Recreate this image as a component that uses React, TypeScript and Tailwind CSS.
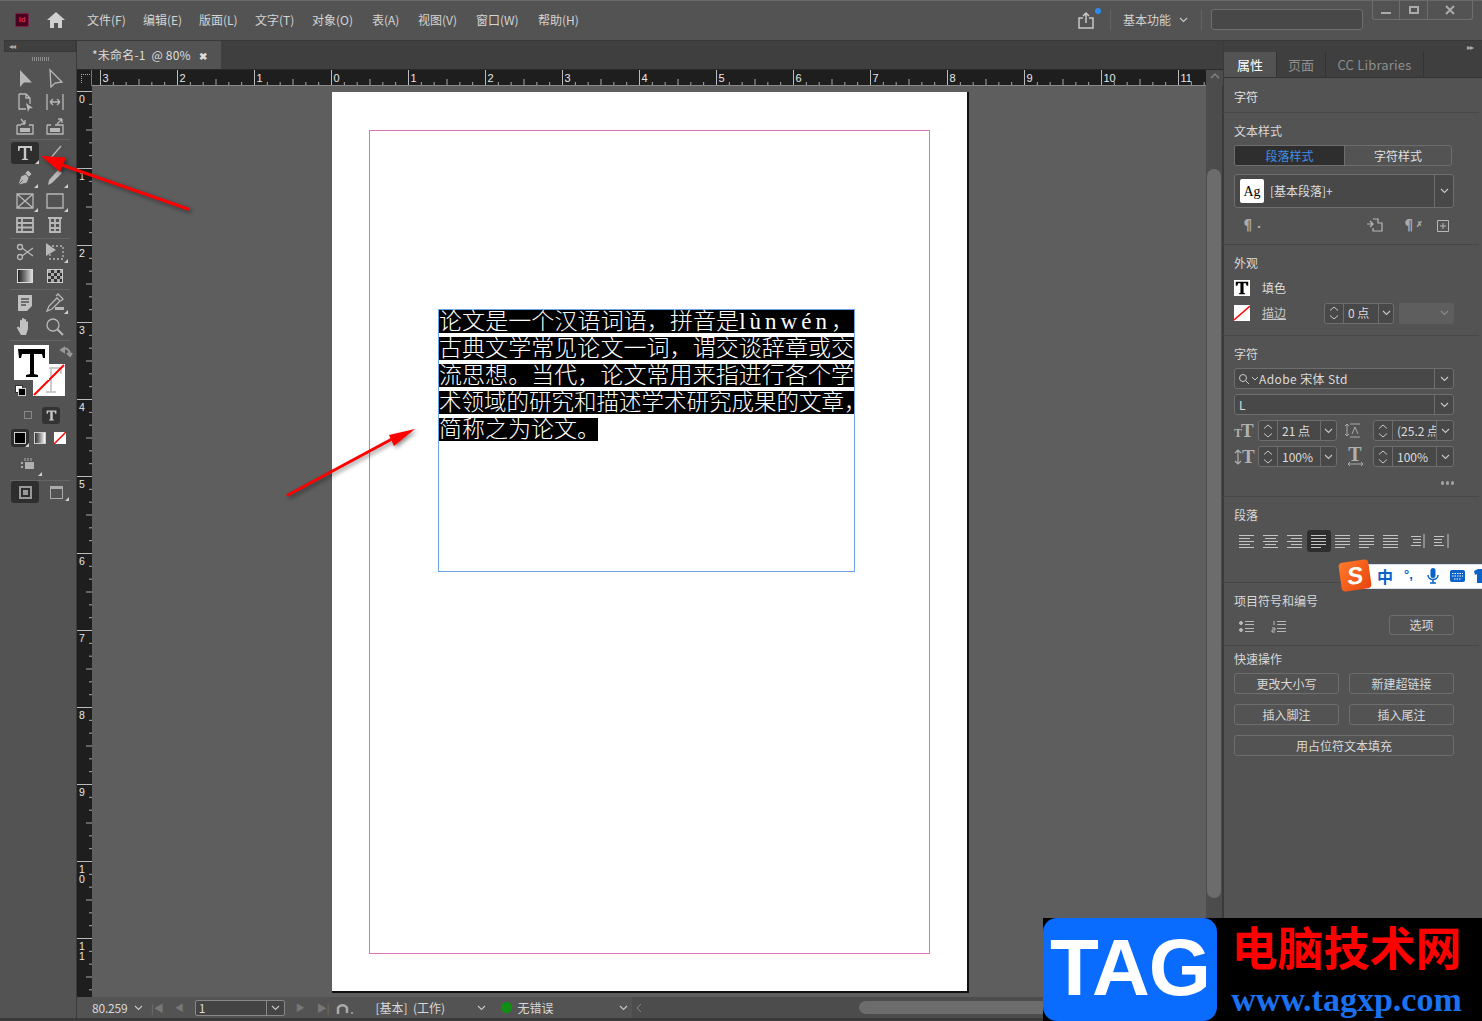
import React from "react";

const sans = "font-['Noto_Sans_CJK_SC','Liberation_Sans',sans-serif]";
const Tri = () => <span className="absolute right-0 bottom-0 w-0 h-0 border-l-[4px] border-l-transparent border-b-[4px] border-b-[#cfcfcf]" />;

const I = ({ children, tri, active, w = 26 }: { children: React.ReactNode; tri?: boolean; active?: boolean; w?: number }) => (
  <div className={`relative h-[22px] flex items-center justify-center rounded-[3px] ${active ? "bg-[#2e2e2e]" : ""}`} style={{ width: w }}>
    <svg width="22" height="22" viewBox="0 0 22 22" fill="none" stroke="#b8b8b8" strokeWidth="1.3">{children}</svg>
    {tri && <Tri />}
  </div>
);

const Row = ({ children }: { children: React.ReactNode }) => <div className="flex justify-between px-[8px] h-[24px] items-center">{children}</div>;
const Sep = () => <div className="h-px bg-[#646464] mx-[6px] my-[1px]" />;

function Toolbar() {
  return (
    <div className="w-[73px] ml-[4px] shrink-0 border-r border-[#3a3a3a] flex flex-col">
      <div className="h-[12px] bg-[#3f3f3f] border border-[#383838] flex items-center pl-[4px] text-[8px] text-[#aaa] tracking-[-1px] leading-none">◂◂</div>
      <div className="h-[14px] flex justify-center items-center"><div className="w-[17px] h-[4px] bg-[repeating-linear-gradient(90deg,#8c8c8c_0,#8c8c8c_1px,transparent_1px,transparent_2px)]" /></div>
      <Row>
        <I><path d="M6 3L18 15.500H10L6 20z" fill="#b8b8b8" stroke="none" /></I>
        <I><path d="M6 3l12 12-7 1-4 4z" /></I>
      </Row>
      <Row>
        <I><path d="M5 3h7l4 4v6M5 3v15h7M12 3v4h4" /><path d="M12 12l7 5-3.500.5-1.500 3.500z" fill="#b8b8b8" stroke="none" /></I>
        <I><path d="M3 3v16M19 3v16M6 11h10M6 11l3-3M6 11l3 3M16 11l-3-3M16 11l-3 3" /></I>
      </Row>
      <Row>
        <I><path d="M3 10v9h16v-9h-4M7 10H3M7 4l4 5M11 9V5M11 9H7" /><path d="M6 13h10v4H6z" fill="#b8b8b8" stroke="none" /></I>
        <I><path d="M3 10v9h16v-9h-8M7 10H3M13 9l5-5M18 4v4M18 4h-4" /><path d="M6 13h10v4H6z" fill="#b8b8b8" stroke="none" /></I>
      </Row>
      <Sep />
      <div className="flex justify-between pl-[7px] pr-[8px] h-[24px] items-center">
        <div className="relative w-[28px] h-[22px] bg-[#2e2e2e] rounded-[3px] flex items-center justify-center">
          <svg width="18" height="18" viewBox="0 0 18 18" fill="#c8c8c8"><path d="M2 2h14v5h-1.300l-.7-3H10.200v10.500l2 .7V16H5.800v-.8l2-.7V4H4L3.300 7H2z" /></svg>
          <Tri />
        </div>
        <div className="w-[26px] flex justify-center"><svg width="22" height="22" viewBox="0 0 22 22" stroke="#b8b8b8" strokeWidth="1.300"><path d="M5 18L17 4" /></svg></div>
      </div>
      <Row>
        <I tri><path d="M4 19l3-9 5-2 3 4-2 5zM4 19l5-5M11 7l3-3 4 4-3 3" fill="#b8b8b8" stroke="#535353" strokeWidth=".8" /></I>
        <I tri><path d="M4 19l1-5 9-10 4 3-10 10z" fill="#b8b8b8" stroke="none" /></I>
      </Row>
      <Row>
        <I tri><path d="M3 4h16v14H3zM3 4l16 14M19 4L3 18" /></I>
        <I tri><path d="M3 4h16v14H3z" /></I>
      </Row>
      <Row>
        <I><path d="M3 4h16v14H3zM3 9h16M3 13.500h16M8 4v14" strokeWidth="1.800" /></I>
        <I><path d="M4 4h14M6 4v14h10V4M6 9h10M6 14h10M11 4v14" strokeWidth="1.800" /></I>
      </Row>
      <Sep />
      <Row>
        <I><circle cx="6" cy="6" r="2.500" /><circle cx="6" cy="16" r="2.500" /><path d="M8 7l11 8M8 15l11-8" /></I>
        <I tri><path d="M8 5h11v13H6v-6" strokeDasharray="2 2" /><path d="M2 2l10 7-10 6z" fill="#b8b8b8" stroke="none" /></I>
      </Row>
      <Row>
        <div className="w-[26px] flex justify-center"><div className="w-[16px] h-[14px] border border-[#ddd] bg-gradient-to-r from-[#222] to-[#ddd]" /></div>
        <div className="w-[26px] flex justify-center"><div className="w-[16px] h-[14px] border border-[#ccc] bg-[conic-gradient(#333_25%,#aaa_0_50%,#333_0_75%,#aaa_0)] bg-[length:6px_6px]" /></div>
      </Row>
      <Sep />
      <Row>
        <I><path d="M4 3h14v11l-5 5H4z" fill="#c0c0c0" stroke="none" /><path d="M7 7h8M7 10h8M7 13h5" stroke="#535353" /></I>
        <I tri><path d="M3 19l2-5 8-8 3 3-8 8zM12 4l2-2 5 5-2 2" /><path d="M11 15h9v3h-9z" fill="#b8b8b8" stroke="none" /></I>
      </Row>
      <Row>
        <I><path d="M7 19l-4-7c0-2 2-1 3 0V5c0-2 2-1 2 0V3c0-1.500 2-1.500 2 0v1c0-1.500 2-1 2 0v2c0-1 2-1 2 .5V13l-2 6z" fill="#c0c0c0" stroke="none" /></I>
        <I><circle cx="9" cy="9" r="6" /><path d="M13.500 13.500L19 19" strokeWidth="2" /></I>
      </Row>
      <Sep />
      <div className="relative h-[60px] shrink-0">
        <div className="absolute left-[10px] top-[3px] w-[35px] h-[35px] bg-white z-10 flex items-center justify-center">
          <svg width="28" height="30" viewBox="0 0 28 30"><path d="M0 1h27v9h-2l-1-4h-8v20l4 1v2H8v-2l4-1V6H4l-1 4H1z" fill="#000" /></svg>
        </div>
        <div className="absolute left-[29px] top-[22px] w-[32px] h-[32px] bg-white overflow-hidden">
          <svg width="32" height="32" viewBox="0 0 32 32"><path d="M10 4h18v6M18 4v24M13 28h10" stroke="#ccc" strokeWidth="2" fill="none" /><path d="M1 31L31 1" stroke="#f00" strokeWidth="2" /></svg>
        </div>
        <svg className="absolute left-[55px] top-[3px]" width="14" height="14" viewBox="0 0 14 14" fill="none" stroke="#999" strokeWidth="2"><path d="M2 5c3-3 8-2 9 4M8 8l3 3 2-3M2 5l3-2v4z" /></svg>
        <div className="absolute left-[11px] top-[43px] w-[12px] h-[12px]">
          <div className="absolute left-0 top-0 w-[8px] h-[8px] bg-white border border-[#333]" />
          <div className="absolute left-[3px] top-[3px] w-[8px] h-[8px] bg-black border border-[#ccc]" />
        </div>
      </div>
      <div className="flex items-center h-[24px] pl-[20px] gap-[10px] mt-[1px]">
        <div className="w-[8px] h-[8px] border border-[#888]" />
        <div className="w-[18px] h-[17px] bg-[#333] rounded-[3px] flex items-center justify-center"><svg width="11" height="11" viewBox="0 0 18 18" fill="#c8c8c8"><path d="M1 1h16v5h-2l-1-3h-3v12l2 1v1H5v-1l2-1V3H4L3 6H1z" /></svg></div>
      </div>
      <div className="flex items-center h-[22px] pl-[7px]">
        <div className="relative w-[18px] h-[18px] bg-[#2e2e2e] rounded-[3px] flex items-center justify-center"><div className="w-[12px] h-[12px] bg-black border border-[#ccc]" /><Tri /></div>
        <div className="w-[12px] h-[12px] ml-[5px] border border-[#ccc] bg-gradient-to-r from-[#333] to-white" />
        <div className="w-[12px] h-[12px] ml-[8px] bg-white overflow-hidden"><svg width="12" height="12"><path d="M0 12L12 0" stroke="#f00" strokeWidth="1.500" /></svg></div>
      </div>
      <div className="h-[30px] pl-[15px] flex items-center">
        <div className="relative w-[20px]"><svg width="20" height="18" viewBox="0 0 20 18"><path d="M2 7h2v2H2zM2 11h2v2H2zM6 7h9v7H6z" fill="#b0b0b0" /><path d="M6 3v3M9 3v3M12 3v3" stroke="#b0b0b0" /></svg><span className="absolute right-[-3px] bottom-[-3px] w-0 h-0 border-l-[4px] border-l-transparent border-b-[4px] border-b-[#cfcfcf]" /></div>
      </div>
      <Sep />
      <div className="flex items-center pl-[7px] -mt-[1px] gap-[11px]">
        <div className="w-[28px] h-[22px] bg-[#2e2e2e] rounded-[3px] flex items-center justify-center">
          <div className="w-[13px] h-[13px] border-2 border-[#999] flex items-center justify-center"><div className="w-[5px] h-[5px] bg-[#999]" /></div>
        </div>
        <div className="relative w-[17px] h-[14px] flex items-center"><div className="w-[13px] h-[13px] border border-[#aaa] border-t-[3px]" /><span className="absolute right-[-2px] bottom-[-2px] w-0 h-0 border-l-[4px] border-l-transparent border-b-[4px] border-b-[#cfcfcf]" /></div>
      </div>
    </div>
  );
}

const PITCH = 77;
function HRuler() {
  const zero = 239.5;
  const W = 1114;
  const ticks: React.ReactNode[] = [];
  for (let u = -3; u <= 11; u++) {
    const x = zero + u * PITCH;
    ticks.push(<line key={u} x1={x} x2={x} y1={0} y2={15} stroke="#bbb" />);
    ticks.push(<text key={"t" + u} x={x + 2} y={12} fontSize="11" fill="#e6e6e6" fontFamily="Liberation Sans">{Math.abs(u)}</text>);
    for (let k = 1; k < 6; k++) {
      const xx = x + (k * PITCH) / 6;
      if (xx < W) ticks.push(<line key={u + "-" + k} x1={xx} x2={xx} y1={k === 3 ? 9 : 12} y2={15} stroke="#aaa" />);
    }
  }
  return (
    <svg width={W} height="16" className="block shrink-0">
      <rect width={W} height="16" fill="#1e1e1e" />
      {ticks}
      <line x1="0" x2={W} y1="15.500" y2="15.500" stroke="#8a8a8a" />
    </svg>
  );
}
function VRuler() {
  const ticks: React.ReactNode[] = [];
  for (let u = 0; u <= 11; u++) {
    const y = 5.5 + u * PITCH;
    ticks.push(<line key={u} x1={0} x2={15} y1={y} y2={y} stroke="#bbb" />);
    const label = String(u).split("");
    label.forEach((c, i) => ticks.push(<text key={"t" + u + i} x={2} y={y + 11 + i * 10} fontSize="10.500" fill="#e6e6e6" fontFamily="Liberation Sans">{c}</text>));
    for (let k = 1; k < 6; k++) {
      const yy = y + (k * PITCH) / 6;
      ticks.push(<line key={u + "-" + k} x1={k === 3 ? 9 : 12} x2={15} y1={yy} y2={yy} stroke="#aaa" />);
    }
  }
  return (
    <svg width="15" height="911" className="block shrink-0">
      <rect width="15" height="911" fill="#1e1e1e" />
      {ticks}
    </svg>
  );
}

const LINES = ["古典文学常见论文一词\uFF0C谓交谈辞章或交", "流思想。当代\uFF0C论文常用来指进行各个学"];

function Canvas() {
  return (
    <div className="flex-1 flex flex-col min-w-0">
      <div className="h-[29px] bg-[#3f3f3f] flex items-end border-t border-[#383838]">
        <div className={`w-[144px] h-[28px] bg-[#535353] flex items-center pl-[15px] text-[12px] text-[#dcdcdc] whitespace-pre tracking-[0.2px] ${sans}`}>
          {"*未命名-1  @ 80%"}<span className="ml-[8px] text-[10px] font-bold">✖</span>
        </div>
      </div>
      <div className="flex h-[17px] border-t border-[#2a2a2a]">
        <div className="w-[15px] h-[16px] bg-[#1e1e1e] border-r border-[#777] relative shrink-0"><div className="absolute left-[4px] top-[4px] w-[9px] h-[9px] border-l border-t border-dotted border-[#aaa]" /></div>
        <HRuler />
        <div className="flex-1 bg-[#4c4c4c] flex justify-center pt-[1px]"><svg width="10" height="10" viewBox="0 0 10 10" fill="none" stroke="#8a8a8a" strokeWidth="1.200"><path d="M1 7l4-4 4 4" /></svg></div>
      </div>
      <div className="flex flex-1 min-h-0">
        <VRuler />
        <div className="flex-1 bg-[#5e5e5e] overflow-hidden">
          <div className="ml-[240px] mt-[6px] w-[637px] h-[901px] bg-white border-r-2 border-b-2 border-[#111] pt-[38px] pl-[37px]">
            <div className="w-[561px] h-[824px] border border-[#e070b8] pt-[179px] pl-[69px]">
              <div className="w-[417px] h-[263px] border border-[#6aa5e8] -ml-px -mt-px flex flex-col gap-[4px] font-['Liberation_Serif','Noto_Sans_CJK_SC',serif] font-light text-white text-[23px] leading-[23px]">
                <div className="h-[23px] bg-black [text-align-last:justify] whitespace-nowrap">{"论文是一个汉语词语\uFF0C拼音是"}<span className="tracking-[4px]">lùnwén</span>{"\uFF0C"}</div>
                {LINES.map((l) => (
                  <div key={l} className="h-[23px] bg-black [text-align-last:justify] whitespace-nowrap">{l}</div>
                ))}
                <div className="h-[23px] bg-black [text-align-last:justify] whitespace-nowrap text-[22.5px]">术领域的研究和描述学术研究成果的文章<span className="inline-block w-[10px]">{"\uFF0C"}</span></div>
                <div className="h-[23px] w-[159px] bg-black whitespace-nowrap">简称之为论文。</div>
              </div>
            </div>
          </div>
        </div>
        <div className="w-[17px] bg-[#4c4c4c] border-r border-[#3a3a3a] py-[83px] px-[1px] flex">
          <div className="w-full h-[729px] bg-[#6c6c6c] rounded-[7px]" />
        </div>
      </div>
      <div className={`h-[21px] bg-[#535353] flex items-center text-[12px] text-[#d8d8d8] ${sans}`}>
        <span className="ml-[15px] w-[42px] tracking-[-0.2px]">80.259</span>
        <Chev />
        <span className="ml-[8px] text-[#777] text-[10px]">|◀</span>
        <span className="ml-[11px] text-[#777] text-[9px]">◀</span>
        <div className="ml-[11px] w-[90px] h-[16px] border border-[#888] rounded-[2px] bg-[#444] flex items-center">
          <span className="flex-1 pl-[3px] leading-none">1</span>
          <span className="w-[18px] h-full border-l border-[#888] flex items-center justify-center"><Chev /></span>
        </div>
        <span className="ml-[11px] text-[#777] text-[9px]">▶</span>
        <span className="ml-[12px] text-[#777] text-[10px]">▶|</span>
        <svg className="ml-[7px]" width="18" height="14" viewBox="0 0 18 14" fill="none" stroke="#aaa" strokeWidth="2.500"><path d="M2 13V7a5 5 0 0 1 9 0v5" /><path d="M15 12h2" strokeWidth="1.500" /></svg>
        <span className="ml-[21px] w-[102px] whitespace-pre">{"[基本]  (工作)"}</span>
        <Chev />
        <span className="ml-[15px] w-[11px] h-[11px] rounded-full bg-[#0f9015]" />
        <span className="ml-[5px] w-[102px]">无错误</span>
        <Chev />
        <div className="ml-[4px] flex-1 h-full bg-[#4c4c4c] flex items-center pl-[3px]"><svg width="8" height="10" viewBox="0 0 8 10" fill="none" stroke="#888"><path d="M6 1L2 5l4 4" /></svg>
          <div className="ml-[216px] h-[13px] w-[320px] bg-[#6c6c6c] rounded-[7px]" />
        </div>
      </div>
    </div>
  );
}

const Chev = ({ c = "#c8c8c8" }: { c?: string }) => <svg width="9" height="6" viewBox="0 0 9 6" fill="none" stroke={c} strokeWidth="1.100" className="shrink-0"><path d="M1 1l3.500 3.500L8 1" /></svg>;
const Spin = () => <svg width="10" height="16" viewBox="0 0 10 16" fill="none" stroke="#c8c8c8" strokeWidth="1"><path d="M1 5.500L5 2l4 3.500M1 10.500L5 14l4-3.500" /></svg>;
const Box = "border border-[#6e6e6e] rounded-[3px] bg-[#484848]";
const Head = ({ children, h = 27, pb = 1 }: { children: React.ReactNode; h?: number; pb?: number }) => (
  <div className="flex items-end shrink-0 text-[12px] leading-[17px] text-[#d8d8d8]" style={{ height: h, paddingBottom: pb }}>{children}</div>
);
const Div = () => <div className="h-px bg-[#474747] -ml-[11px] w-[256px] shrink-0" />;

const Stepper = ({ v, w, tw }: { v: string; w: number; tw: number }) => (
  <div className={`${Box} h-[21px] flex items-center text-[12px] text-[#dcdcdc] shrink-0`} style={{ width: w }}>
    <span className="w-[19px] h-full border-r border-[#6e6e6e] flex items-center justify-center shrink-0"><Spin /></span>
    <span className="pl-[4px] overflow-hidden whitespace-nowrap shrink-0" style={{ width: tw }}>{v}</span>
    <span className="flex-1 h-full border-l border-[#6e6e6e] flex items-center justify-center"><Chev /></span>
  </div>
);
const Select = ({ children }: { children: React.ReactNode }) => (
  <div className={`${Box} h-[21px] flex items-center text-[12px] text-[#dcdcdc]`}>
    <span className="flex-1 flex items-center pl-[3px] min-w-0">{children}</span>
    <span className="w-[19px] h-full border-l border-[#6e6e6e] flex items-center justify-center"><Chev /></span>
  </div>
);
const Btn = ({ children, className = "" }: { children: React.ReactNode; className?: string }) => (
  <div className={`h-[21px] border border-[#6e6e6e] rounded-[3px] flex items-center justify-center text-[12px] text-[#d8d8d8] ${className}`}>{children}</div>
);
const Align = ({ kind, active }: { kind: string; active?: boolean }) => {
  const rows = kind === "l" ? [[0, 15], [0, 11], [0, 15], [0, 11], [0, 15]] : kind === "c" ? [[0, 15], [2, 13], [0, 15], [2, 13], [0, 15]] : kind === "r" ? [[0, 15], [4, 15], [0, 15], [4, 15], [0, 15]] : kind === "j" ? [[0, 15], [0, 15], [0, 15], [0, 15], [0, 10]] : [[0, 15], [0, 15], [0, 15], [0, 15], [0, 15]];
  return (
    <div className={`w-[24px] h-[22px] shrink-0 flex items-center justify-center rounded-[3px] ${active ? "bg-[#2e2e2e]" : ""}`}>
      <svg width="16" height="13" viewBox="0 0 16 13" stroke="#c4c4c4" strokeWidth="1">{rows.map((r, i) => <line key={i} x1={r[0]} x2={r[1]} y1={i * 3 + 0.5} y2={i * 3 + 0.5} />)}</svg>
    </div>
  );
};

function Panel() {
  return (
    <div className={`w-[259px] shrink-0 border-l border-[#3a3a3a] flex flex-col ${sans}`}>
      <div className="h-[12px] bg-[#3f3f3f] border-t border-[#383838] flex items-center justify-end pr-[9px] text-[8px] text-[#aaa] tracking-[-1px] leading-none">▸▸</div>
      <div className="h-[26px] bg-[#3f3f3f] flex text-[13px] border-b border-[#333]">
        <div className="w-[52px] bg-[#535353] text-white flex items-center justify-center">属性</div>
        <div className="w-[50px] border-r border-l border-[#333] text-[#8e8e8e] flex items-center justify-center">页面</div>
        <div className="w-[98px] border-r border-[#333] text-[#8e8e8e] flex items-center justify-center tracking-[0.2px]">CC Libraries</div>
      </div>
      <div className="pl-[10px] w-[230px] flex flex-col">
        <div className="h-[34px] pt-[3px] w-[220px] flex items-center text-[12px] text-[#e0e0e0]">字符</div>
        <Div />
        <Head>文本样式</Head>
        <div className="flex h-[21px] mt-[5px] w-[218px] border border-[#6e6e6e] rounded-[3px] text-[12px] overflow-hidden">
          <div className="w-[109px] bg-[#2e2e2e] text-[#3f8ee8] flex items-center justify-center">段落样式</div>
          <div className="flex-1 border-l border-[#6e6e6e] text-[#e0e0e0] flex items-center justify-center">字符样式</div>
        </div>
        <div className={`${Box} mt-[8px] h-[34px] flex items-center text-[12px] text-[#dcdcdc]`}>
          <span className="ml-[5px] w-[24px] h-[24px] bg-white rounded-[2px] text-black flex items-center justify-center font-['Liberation_Serif',serif] text-[14px]">Ag</span>
          <span className="ml-[6px] flex-1">[基本段落]+</span>
          <span className="w-[19px] h-full border-l border-[#6e6e6e] flex items-center justify-center"><Chev /></span>
        </div>
        <div className="h-[36px] flex items-center text-[#aaa] text-[14px] pb-[1px]">
          <span className="w-[132px] shrink-0 pl-[7px] font-bold flex items-center -mt-[3px]">¶<span className="text-[8px] mt-[6px]">▪</span></span>
          <svg className="shrink-0" width="17" height="15" viewBox="0 0 17 15" fill="none" stroke="#b8b8b8" strokeWidth="1.200"><path d="M7 1h5v4h4v8H7v-3M1 6h6M4 3l3 3-3 3" /></svg>
          <span className="ml-[19px] w-[16px] shrink-0 font-bold flex items-center -mt-[3px]">¶<span className="text-[8px]">✗</span></span>
          <svg className="ml-[19px] shrink-0" width="12" height="12" viewBox="0 0 12 12" fill="none" stroke="#b8b8b8"><path d="M.5.500h11v11H.500zM6 3v6M3 6h6" /></svg>
        </div>
        <Div />
        <Head>外观</Head>
        <div className="h-[22px] flex items-center text-[12px] text-[#dcdcdc] mt-[5px]">
          <span className="w-[16px] h-[16px] bg-white flex items-center justify-center"><svg width="14" height="14" viewBox="0 0 18 18"><path d="M1 1h16v5h-2l-1-3h-3v12l2 1v1H5v-1l2-1V3H4L3 6H1z" /></svg></span>
          <span className="ml-[12px]">填色</span>
        </div>
        <div className="h-[26px] mt-[1px] flex items-center text-[12px] text-[#c8c8c8]">
          <span className="w-[16px] h-[16px] bg-white overflow-hidden shrink-0"><svg width="16" height="16"><path d="M0 15L16 1" stroke="#f00" strokeWidth="1.500" /></svg></span>
          <span className="ml-[12px] underline w-[62px] shrink-0">描边</span>
          <Stepper v="0 点" w={70} tw={34} />
          <div className="ml-[5px] w-[55px] h-[21px] bg-[#5e5e5e] rounded-[2px] flex items-center justify-end pr-[5px] shrink-0"><Chev c="#8a8a8a" /></div>
        </div>
        <div className="h-[9px] shrink-0" />
        <Div />
        <Head>字符</Head>
        <div className="mt-[5px]">
          <Select><svg width="22" height="12" viewBox="0 0 22 12" fill="none" stroke="#c8c8c8" className="shrink-0"><circle cx="5" cy="5" r="3.500" /><path d="M8 8l3 3M14 4l3 3 3-3" /></svg><span className="ml-[-1px] tracking-[0.4px]">Adobe 宋体 Std</span></Select>
        </div>
        <div className="mt-[5px]"><Select><span className="ml-[1px]">L</span></Select></div>
        <div className="mt-[5px] flex items-center h-[21px]">
          <span className="w-[24px] shrink-0 font-['Liberation_Serif',serif] font-bold text-[#b0b0b0] text-[19px] leading-none tracking-[-1px]"><span className="text-[12px]">T</span>T</span>
          <Stepper v="21 点" w={79} tw={42} />
          <span className="w-[36px] shrink-0 flex justify-center -ml-[3px] mr-[3px]"><svg width="17" height="17" viewBox="0 0 17 17" fill="none" stroke="#aaa"><path d="M6 2h10M6 15h10M3 2v12M1 4l2-2 2 2M1 12l2 2 2-2M8 12l3-7 3 7" /></svg></span>
          <Stepper v="(25.2 点" w={81} tw={43} />
        </div>
        <div className="mt-[5px] flex items-center h-[21px]">
          <span className="w-[24px] shrink-0 flex items-center font-['Liberation_Serif',serif] font-bold text-[#b0b0b0] text-[19px] leading-none"><svg width="8" height="16" viewBox="0 0 8 16" fill="none" stroke="#b0b0b0" strokeWidth="1.200" className="shrink-0"><path d="M4 1v14M1 4l3-3 3 3M1 12l3 3 3-3" /></svg>T</span>
          <Stepper v="100%" w={79} tw={42} />
          <span className="w-[36px] shrink-0 flex flex-col items-center font-['Liberation_Serif',serif] font-bold text-[#b0b0b0] text-[20px] leading-[14px]">T<svg width="17" height="6" viewBox="0 0 17 6" fill="none" stroke="#aaa"><path d="M1 3h15M3 1L1 3l2 2M14 1l2 2-2 2" /></svg></span>
          <Stepper v="100%" w={81} tw={43} />
        </div>
        <div className="h-[29px] pt-[3px] shrink-0 flex items-center justify-end gap-[1.500px]">
          <i className="w-[3.500px] h-[3.500px] rounded-full bg-[#a0a0a0]" /><i className="w-[3.500px] h-[3.500px] rounded-full bg-[#a0a0a0]" /><i className="w-[3.500px] h-[3.500px] rounded-full bg-[#a0a0a0]" />
        </div>
        <Div />
        <Head>段落</Head>
        <div className="flex mt-[6px] h-[22px] items-center">
          <div className="w-px shrink-0" /><Align kind="l" /><Align kind="c" /><Align kind="r" /><Align kind="j" active /><Align kind="j" /><Align kind="j" /><Align kind="a" />
          <div className="w-[24px] ml-[2px] shrink-0 flex justify-center"><svg width="16" height="14" stroke="#c4c4c4"><path d="M15 0v14M2 2.500h10M4 5.500h8M4 8.500h8M2 11.500h10" /></svg></div>
          <div className="w-[24px] shrink-0 flex justify-center"><svg width="16" height="14" stroke="#c4c4c4"><path d="M15 0v14M1 2.500h10M1 5.500h8M1 8.500h8M1 11.500h10" /></svg></div>
        </div>
        <div className="h-[30px] shrink-0" />
        <Div />
        <Head h={26} pb={0}>项目符号和编号</Head>
        <div className="mt-[6px] h-[20px] flex items-center">
          <svg className="ml-[5px] shrink-0 mt-[3px]" width="16" height="14" viewBox="0 0 16 14" stroke="#b8b8b8" fill="#b8b8b8"><circle cx="2" cy="3" r="1.500" /><circle cx="2" cy="10" r="1.500" /><path d="M6 1.500h9M6 4.500h9M6 8.500h9M6 11.500h9" /></svg>
          <svg className="ml-[16px] shrink-0 mt-[3px]" width="16" height="14" viewBox="0 0 16 14" stroke="#b8b8b8" fill="none"><path d="M3 1v4M1 8h3v2H1v2h3M6 1.500h9M6 4.500h9M6 8.500h9M6 11.500h9" /></svg>
          <Btn className="ml-auto w-[65px] !h-[20px]">选项</Btn>
        </div>
        <div className="h-[10px] shrink-0" />
        <Div />
        <Head h={26} pb={5}>快速操作</Head>
        <div className="mt-[1px] grid grid-cols-[105px_105px] gap-x-[10px] gap-y-[10px]">
          <Btn>更改大小写</Btn><Btn>新建超链接</Btn><Btn>插入脚注</Btn><Btn>插入尾注</Btn>
          <Btn className="col-span-2">用占位符文本填充</Btn>
        </div>
      </div>
    </div>
  );
}

function TopBar() {
  return (
    <div className={`h-[40px] shrink-0 flex items-center pb-[2px] text-[12px] text-[#d4d4d4] relative border-t border-[#6a6a6a] ${sans}`}>
      <div className="ml-[15px] w-[14px] h-[14px] rounded-[2px] bg-[#49021f] border border-[#7d1d45] flex items-center justify-center text-[8px] leading-none text-[#ff3b7a] font-['Liberation_Sans',sans-serif]">Id</div>
      <svg className="ml-[17px]" width="20" height="18" viewBox="0 0 20 18" fill="#d0d0d0"><path d="M10 1L1 9h3v8h4v-5h4v5h4V9h3z" /></svg>
      <div className="flex ml-[21px] items-center">
        {[["文件(F)", 56], ["编辑(E)", 56], ["版面(L)", 56], ["文字(T)", 57], ["对象(O)", 60], ["表(A)", 46], ["视图(V)", 58], ["窗口(W)", 62], ["帮助(H)", 50]].map(([t, w]) => (
          <span key={t as string} className="whitespace-nowrap" style={{ width: w as number }}>{t}</span>
        ))}
      </div>
      <div className="ml-auto flex items-center pr-[119px]">
        <div className="relative w-[18px] h-[18px] mr-[14px]">
          <svg width="18" height="18" viewBox="0 0 18 18" fill="none" stroke="#c8c8c8" strokeWidth="1.500"><path d="M5 7H1v10h14V7h-4M8 12V2M5 5l3-3 3 3" /></svg>
          <span className="absolute right-[-5px] top-[-3px] w-[6px] h-[6px] rounded-full bg-[#2d8ceb]" />
        </div>
        <div className="w-px h-[20px] bg-[#626262] mr-[12px]" />
        <span className="text-[#d0d0d0]">基本功能</span>
        <span className="ml-[8px]"><Chev /></span>
        <div className="w-px h-[20px] bg-[#626262] ml-[13px] mr-[9px]" />
        <div className="w-[152px] h-[21px] border border-[#6e6e6e] rounded-[3px] bg-[#484848]" />
      </div>
      <div className="absolute right-[9px] top-0 h-[19px] w-[101px] border border-t-0 border-[#6e6e6e] rounded-b-[3px] flex">
        <div className="w-[27px] border-r border-[#6e6e6e] flex items-center justify-center"><span className="w-[10px] h-[2px] bg-[#aaa] mt-[6px]" /></div>
        <div className="w-[28px] border-r border-[#6e6e6e] flex items-center justify-center"><span className="w-[10px] h-[8px] border-2 border-[#aaa]" /></div>
        <div className="flex-1 flex items-center justify-center"><svg width="10" height="10" viewBox="0 0 10 10" stroke="#aaa" strokeWidth="2"><path d="M1 1l8 8M9 1l-8 8" /></svg></div>
      </div>
    </div>
  );
}

const Arrows = () => (
  <svg className="absolute left-0 top-0 pointer-events-none drop-shadow-[2px_2px_2px_rgba(0,0,0,0.45)]" width="450" height="520" viewBox="0 0 450 520">
    <path d="M188 209L62 165" stroke="#f00" strokeWidth="3" strokeLinecap="round" />
    <path d="M41 156L66 157.500 60 172z" fill="#f00" />
    <path d="M288 495L392 439" stroke="#f00" strokeWidth="3" strokeLinecap="round" />
    <path d="M415 429L389 435 394 446z" fill="#f00" />
  </svg>
);

const Sogou = () => (
  <div className="absolute left-[1340px] top-[563px] h-[26px] w-[142px] flex items-center">
    <div className="absolute left-[15px] top-[1px] right-0 h-[25px] bg-white border-y border-[#cfe0f5]" />
    <div className="relative w-[30px] h-[29px] -mt-[2px] rounded-[4px] bg-gradient-to-br from-[#ff7a28] to-[#e8410e] -rotate-[8deg] flex items-center justify-center text-white text-[24px] font-black italic font-['Liberation_Sans',sans-serif] leading-none shrink-0">S</div>
    <span className={`relative ml-[7px] text-[#0a62c9] font-bold text-[16px] leading-none shrink-0 ${sans}`}>中</span>
    <span className="relative ml-[11px] w-[10px] text-[#0a62c9] font-bold text-[13px] font-['Liberation_Sans',sans-serif] leading-none -mt-[4px] shrink-0">°,</span>
    <svg className="relative ml-[13px] shrink-0" width="12" height="16" viewBox="0 0 12 16" fill="#0a62c9"><rect x="3.500" y="0" width="5" height="10" rx="2.500" /><path d="M1 7c0 6 10 6 10 0M6 12v3M3 15h6" fill="none" stroke="#0a62c9" strokeWidth="1.500" /></svg>
    <svg className="relative ml-[11px] shrink-0" width="15" height="12" viewBox="0 0 15 12"><rect width="15" height="12" rx="2" fill="#0a62c9" /><path d="M2 3.500h11M2 6h11M4 9h7" stroke="#fff" strokeDasharray="1.500 1" /></svg>
    <svg className="relative ml-[9px] shrink-0" width="12" height="14" viewBox="0 0 12 14" fill="#0a62c9"><path d="M0 2l4-2h4l4 2-1 4-2-1v9H3V5L1 6z" /></svg>
  </div>
);

const Watermark = () => (
  <div className="absolute left-[1043px] top-[918px] w-[439px] h-[103px] bg-black flex">
    <div className="w-[174px] h-[103px] pb-[4px] bg-[#0a6cff] rounded-[14px] flex items-center justify-center text-white font-bold font-['Liberation_Sans',sans-serif] text-[80px] leading-none tracking-[-1px]">TAG</div>
    <div className="flex-1 flex flex-col items-center pr-[6px]">
      <div className="text-[#ff0000] font-bold text-[46px] leading-[46px] mt-[4px] font-['Noto_Sans_CJK_SC',serif] whitespace-nowrap">电脑技术网</div>
      <div className="text-[#1a72f0] font-['Liberation_Serif',serif] text-[34px] leading-[34px] mt-[15px] font-bold whitespace-nowrap">www.tagxp.com</div>
    </div>
  </div>
);

export default function App() {
  return (
    <div className="relative w-[1482px] h-[1021px] overflow-hidden bg-[#535353] flex flex-col">
      <TopBar />
      <div className="flex flex-1 min-h-0">
        <Toolbar />
        <Canvas />
        <Panel />
      </div>
      <div className="h-[3px] bg-[#3a3a3a] shrink-0" />
      <Arrows />
      <Sogou />
      <Watermark />
    </div>
  );
}
